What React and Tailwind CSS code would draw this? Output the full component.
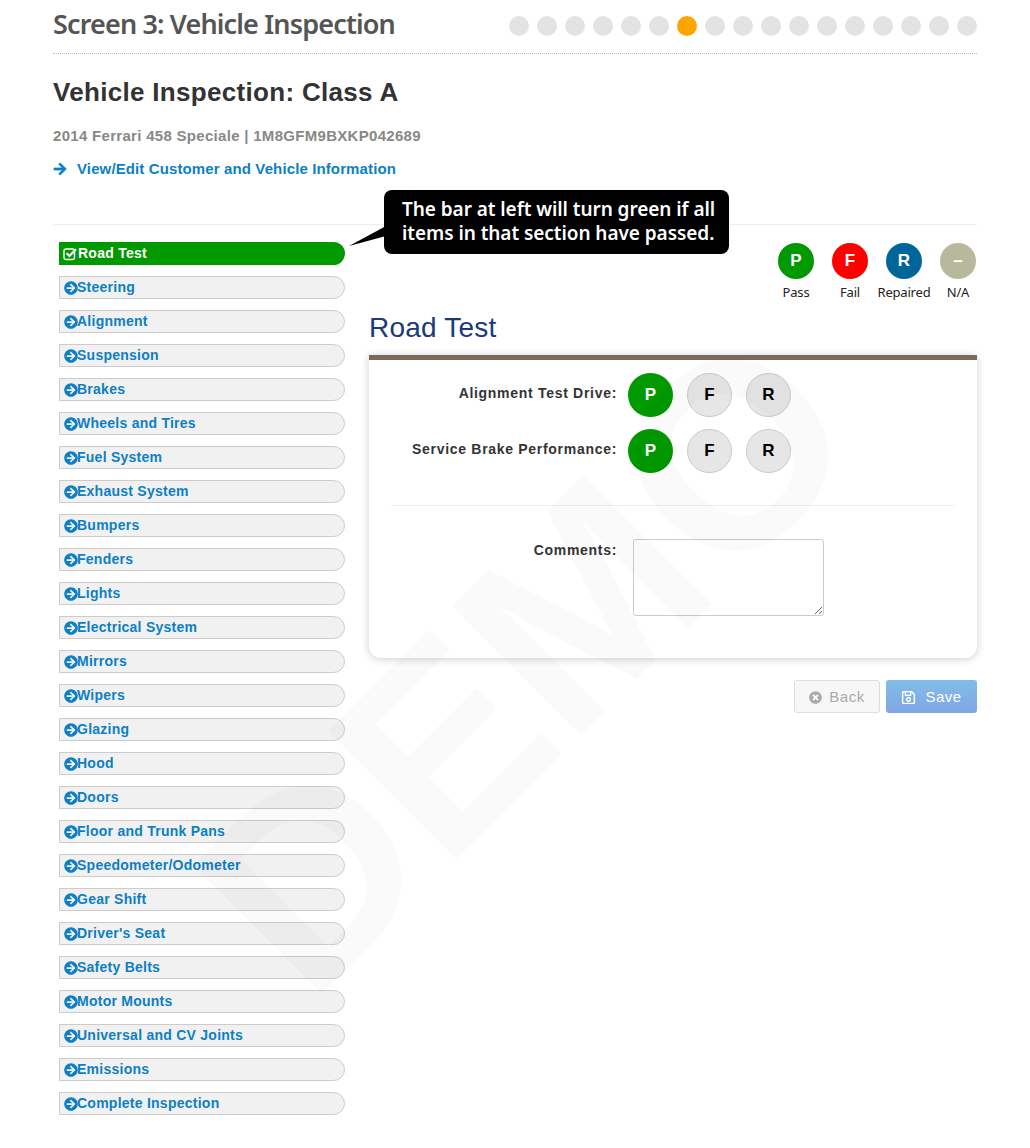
import React from 'react';
import { FaArrowCircleRight, FaArrowRight, FaTimesCircle, FaRegSave } from 'react-icons/fa';

const SECTIONS = [
    'Steering', 'Alignment', 'Suspension', 'Brakes', 'Wheels and Tires', 'Fuel System', 'Exhaust System',
    'Bumpers', 'Fenders', 'Lights', 'Electrical System', 'Mirrors', 'Wipers', 'Glazing', 'Hood', 'Doors',
    'Floor and Trunk Pans', 'Speedometer/Odometer', 'Gear Shift', "Driver's Seat", 'Safety Belts',
    'Motor Mounts', 'Universal and CV Joints', 'Emissions', 'Complete Inspection',
];

const LEGEND = [
    { letter: 'P', label: 'Pass', color: 'bg-[#009900]' },
    { letter: 'F', label: 'Fail', color: 'bg-[#ff0000]' },
    { letter: 'R', label: 'Repaired', color: 'bg-[#006699]' },
    { letter: '–', label: 'N/A', color: 'bg-[#b8b89c]' },
];

const CheckIcon = () => (
    <svg width="15" height="14" viewBox="0 0 15 14" className="shrink-0">
        <rect x="1" y="2" width="10.5" height="10.5" rx="2" fill="none" stroke="currentColor" strokeWidth="1.4" />
        <path d="M3.6 6.2 L6.4 9 L13 2.2" fill="none" stroke="currentColor" strokeWidth="2.2" />
    </svg>
);

const ChoiceRow = ({ label }) => (
    <div className="flex items-start">
        <div className="w-[248px] pt-[10px] text-right text-[14px] leading-[20px] font-bold tracking-[0.7px] text-[#333]">{label}:</div>
        <div className="ml-[11px] flex">
            <div className="flex h-[44px] w-[45px] items-center justify-center rounded-full bg-[#009900] text-[17px] font-bold text-white">P</div>
            <div className="ml-[14px] flex h-[44px] w-[45px] items-center justify-center rounded-full border border-[#ccc] bg-[#e6e6e6] text-[17px] font-bold text-black">F</div>
            <div className="ml-[14px] flex h-[44px] w-[45px] items-center justify-center rounded-full border border-[#ccc] bg-[#e6e6e6] text-[17px] font-bold text-black">R</div>
        </div>
    </div>
);

const App = () => {
    return (
        <div className="relative h-[1148px] w-[1030px] overflow-hidden bg-white font-['Liberation_Sans',sans-serif]">
            <div className="mx-[53px]">
                <header className="flex h-[54px] items-start justify-between border-b border-dotted border-[#bbb]">
                    <h2 className="pt-[5px] font-['Noto_Sans',sans-serif] text-[27px] leading-[38px] font-semibold tracking-[-0.85px] text-[#555]">Screen 3: Vehicle Inspection</h2>
                    <div className="mt-[16px] flex w-[468px] justify-between">
                        {Array.from({ length: 17 }).map((_, i) => (
                            <div key={i} className={i === 6 ? 'h-[20px] w-[20px] rounded-full bg-[#ffa500]' : 'h-[20px] w-[20px] rounded-full bg-[#e3e3e3]'}></div>
                        ))}
                    </div>
                </header>

                <h1 className="mt-[21px] text-[26px] leading-[34px] font-bold tracking-[0.31px] text-[#333]">Vehicle Inspection: Class A</h1>
                <p className="mt-[17px] text-[15px] leading-[20px] font-bold tracking-[0.3px] text-[#888]">2014 Ferrari 458 Speciale | 1M8GFM9BXKP042689</p>
                <a className="mt-[13px] flex items-center text-[15px] leading-[20px] font-bold tracking-[0.12px] text-[#0d7fc4]">
                    <FaArrowRight size={14} stroke="currentColor" strokeWidth={24} />
                    <span className="ml-[10px]">View/Edit Customer and Vehicle Information</span>
                </a>

                <div className="mt-[45px] flex border-t border-[#eee] pt-[17px]">
                    {/* Section list */}
                    <nav className="ml-[6px] flex w-[286px] flex-col gap-[11px]">
                        <div className="flex h-[23px] items-center rounded-r-full bg-[#009900] pl-[4px] text-[14px] font-bold tracking-[0.25px] text-white">
                            <CheckIcon />
                            <span>Road Test</span>
                        </div>
                        {SECTIONS.map(name => (
                            <div key={name} className="flex h-[23px] items-center rounded-r-full border border-[#ccc] bg-[#f1f1f1] pl-[4px] text-[14px] font-bold tracking-[0.25px] text-[#0d7fc4]">
                                <FaArrowCircleRight size={14} className="mr-[-1px] shrink-0" />
                                <span>{name}</span>
                            </div>
                        ))}
                    </nav>

                    <main className="ml-[24px] w-[608px] pt-[1px]">
                        <div className="flex justify-end gap-[18px] pr-[1px]">
                            {LEGEND.map(item => (
                                <div key={item.label} className="flex w-[36px] flex-col items-center">
                                    <div className={`flex h-[36px] w-[36px] items-center justify-center rounded-full text-[17px] font-bold text-white ${item.color}`}>{item.letter}</div>
                                    <span className="mt-[5px] whitespace-nowrap font-['Noto_Sans',sans-serif] text-[13px] leading-[16px] tracking-[-0.2px] text-[#222]">{item.label}</span>
                                </div>
                            ))}
                        </div>

                        <h3 className="mt-[11px] text-[28px] leading-[34px] tracking-[0.2px] text-[#1a3a7a]">Road Test</h3>

                        <div className="mt-[10px] h-[303px] rounded-b-[12px] border-t-[5px] border-[#7a6a5c] bg-white pt-[13px] shadow-[0_1px_8px_rgba(0,0,0,0.2)]">
                            <div className="flex flex-col gap-[12px]">
                                <ChoiceRow label="Alignment Test Drive" />
                                <ChoiceRow label="Service Brake Performance" />
                            </div>
                            <div className="mx-[22px] mt-[32px] border-t border-[#eee]"></div>
                            <div className="mt-[33px] flex items-start">
                                <div className="w-[248px] pt-[1px] text-right text-[14px] leading-[20px] font-bold tracking-[0.7px] text-[#333]">Comments:</div>
                                <textarea className="ml-[16px] h-[77px] w-[191px] rounded-[3px] border border-[#ccc] bg-transparent"></textarea>
                            </div>
                        </div>

                        <div className="mt-[22px] flex justify-end gap-[6px]">
                            <button className="flex h-[33px] w-[86px] items-center justify-center gap-[7px] rounded-[3px] border border-[#ddd] bg-[#f7f7f7] pt-[1px] text-[15px] tracking-[0.5px] text-[#aaa]">
                                <FaTimesCircle size={13} />
                                Back
                            </button>
                            <button className="flex h-[33px] w-[91px] items-center justify-center gap-[9px] rounded-[3px] bg-gradient-to-b from-[#80bde6] to-[#80a6e6] pt-[1px] text-[15px] tracking-[0.5px] text-white">
                                <FaRegSave size={15} />
                                Save
                            </button>
                        </div>
                    </main>
                </div>
            </div>

            {/* Callout over the section list */}
            <div className="absolute top-[190px] left-[384px] flex h-[64px] w-[345px] items-center rounded-[8px] bg-black pb-[2px] pl-[18px] font-['Noto_Sans',sans-serif] text-[19px] leading-[24px] font-semibold tracking-[-0.06px] text-white">
                <div>The bar at left will turn green if all<br />items in that section have passed.</div>
            </div>
            <svg className="absolute top-[224px] left-[348px]" width="38" height="24">
                <path d="M38 2 L1 22 L38 12 Z" fill="#000" />
            </svg>

            {/* DEMO watermark */}
            <div className="pointer-events-none absolute top-[662px] left-[525px] -translate-x-1/2 -translate-y-1/2 -rotate-45 text-[264px] leading-none font-bold whitespace-nowrap text-black/[0.02]">DEMO</div>
        </div>
    );
};

export default App;
